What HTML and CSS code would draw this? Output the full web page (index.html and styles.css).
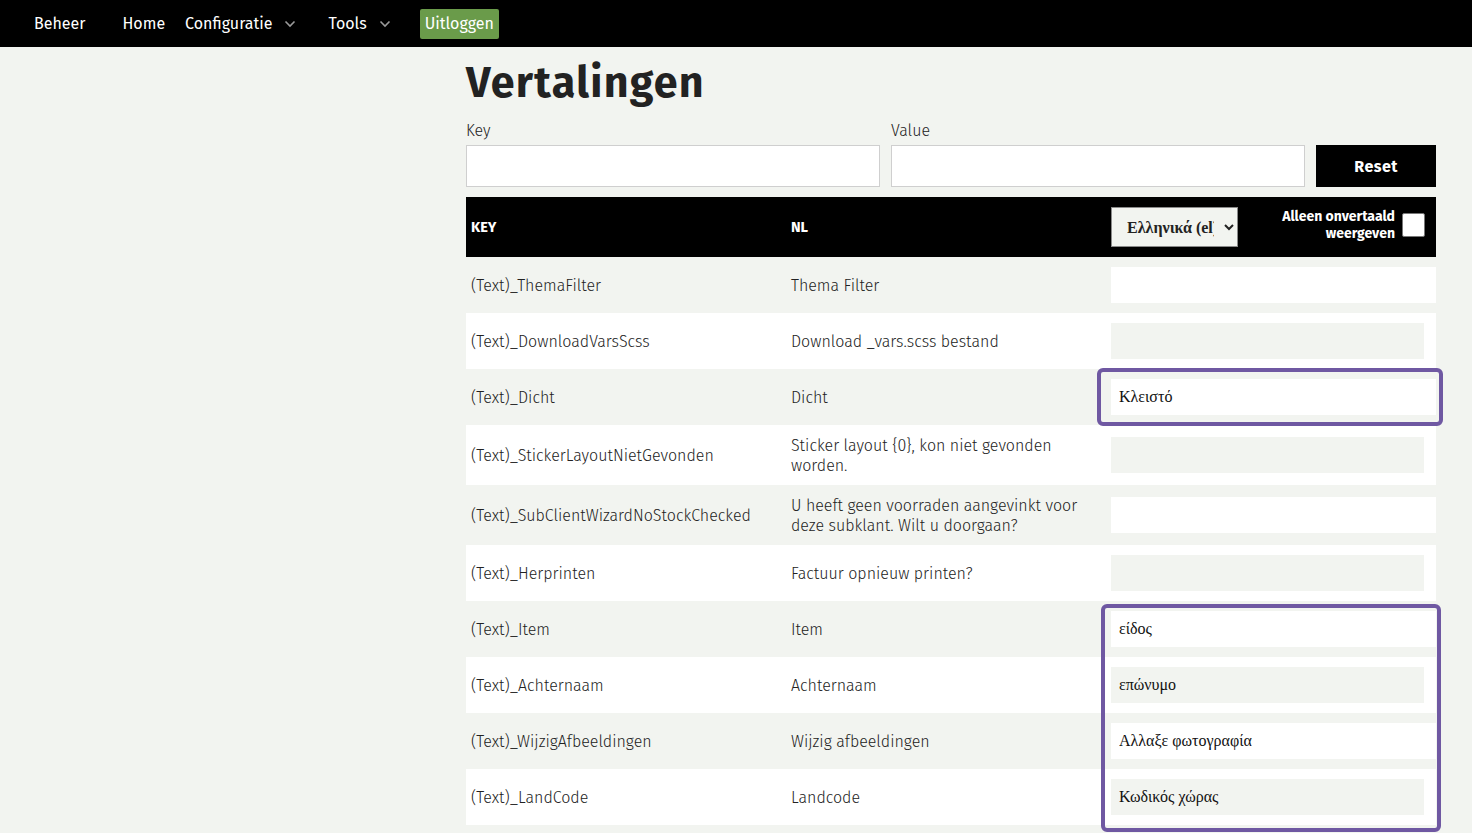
FILE: index.html
```html
<!DOCTYPE html>
<html lang="nl">
<head>
<meta charset="utf-8">
<title>Vertalingen</title>
<link rel="stylesheet" href="styles.css">
</head>
<body>
<nav class="topbar">
  <span class="brand">Beheer</span>
  <a class="nav-link" href="#">Home</a>
  <a class="nav-link dropdown" href="#">Configuratie
    <svg class="chev" width="12" height="8" viewBox="0 0 12 8"><path d="M1.5 1.5 L6 6 L10.5 1.5" fill="none" stroke="#9a9a9a" stroke-width="1.6"/></svg>
  </a>
  <a class="nav-link dropdown" href="#">Tools
    <svg class="chev" width="12" height="8" viewBox="0 0 12 8"><path d="M1.5 1.5 L6 6 L10.5 1.5" fill="none" stroke="#9a9a9a" stroke-width="1.6"/></svg>
  </a>
  <button class="logout">Uitloggen</button>
</nav>

<main class="content">
  <h1 class="title">Vertalingen</h1>
  <div class="filters">
    <label class="field">
      <span class="field-label">Key</span>
      <input class="field-input" type="text">
    </label>
    <label class="field">
      <span class="field-label">Value</span>
      <input class="field-input" type="text">
    </label>
    <button class="reset">Reset</button>
  </div>

  <div class="table-wrap">
    <table class="tr-table">
      <thead>
        <tr>
          <th class="col-key">KEY</th>
          <th class="col-nl">NL</th>
          <th class="col-lang">
            <div class="lang-head">
              <select class="lang-select"><option>Ελληνικά (el)</option></select>
              <label class="only-untranslated">
                <span>Alleen onvertaald<br>weergeven</span>
                <span class="checkbox"></span>
              </label>
            </div>
          </th>
        </tr>
      </thead>
      <tbody>
        <tr><td>(Text)_ThemaFilter</td><td>Thema Filter</td><td class="val"><input class="val-input" value=""></td></tr>
        <tr><td>(Text)_DownloadVarsScss</td><td>Download _vars.scss bestand</td><td class="val"><input class="val-input" value=""></td></tr>
        <tr><td>(Text)_Dicht</td><td>Dicht</td><td class="val"><input class="val-input" value="Κλειστό"></td></tr>
        <tr class="tall"><td>(Text)_StickerLayoutNietGevonden</td><td>Sticker layout {0}, kon niet gevonden worden.</td><td class="val"><input class="val-input" value=""></td></tr>
        <tr class="tall"><td>(Text)_SubClientWizardNoStockChecked</td><td>U heeft geen voorraden aangevinkt voor deze subklant. Wilt u doorgaan?</td><td class="val"><input class="val-input" value=""></td></tr>
        <tr><td>(Text)_Herprinten</td><td>Factuur opnieuw printen?</td><td class="val"><input class="val-input" value=""></td></tr>
        <tr><td>(Text)_Item</td><td>Item</td><td class="val"><input class="val-input" value="είδος"></td></tr>
        <tr><td>(Text)_Achternaam</td><td>Achternaam</td><td class="val"><input class="val-input" value="επώνυμο"></td></tr>
        <tr><td>(Text)_WijzigAfbeeldingen</td><td>Wijzig afbeeldingen</td><td class="val"><input class="val-input" value="Αλλαξε φωτογραφία"></td></tr>
        <tr><td>(Text)_LandCode</td><td>Landcode</td><td class="val"><input class="val-input" value="Κωδικός χώρας"></td></tr>
      </tbody>
    </table>
    <div class="mark mark-one"></div>
    <div class="mark mark-two"></div>
  </div>
</main>
</body>
</html>
```

FILE: styles.css
```css
html, body {
  margin: 0;
  padding: 0;
}
body {
  background: #f2f4f0;
  font-family: "Fira Sans", "Noto Sans", "Open Sans", sans-serif;
  color: #222;
  font-size: 16px;
}

.topbar {
  height: 47px;
  background: #000;
  display: flex;
  align-items: center;
  padding-left: 34px;
  box-sizing: border-box;
}
.brand {
  color: #fff;
  font-size: 16px;
  font-weight: 400;
  margin-right: 37px;
}
.nav-link {
  color: #fff;
  text-decoration: none;
  font-size: 16px;
  font-weight: 400;
  display: flex;
  align-items: center;
  margin-right: 20px;
}
.nav-link.dropdown {
  margin-right: 32px;
}
.chev {
  margin-left: 12px;
}
.logout {
  background: #6a9b4a;
  color: #fff;
  border: none;
  border-radius: 2px;
  font-family: inherit;
  font-size: 16px;
  font-weight: 400;
  height: 30px;
  padding: 0 5px;
  margin-left: -3px;
}

.content {
  margin-left: 466px;
  width: 970px;
  padding-bottom: 40px;
}
.title {
  margin: 10px 0 0;
  font-size: 43px;
  font-weight: 700;
  letter-spacing: 1.3px;
  line-height: 52px;
  color: #222;
}
.filters {
  display: flex;
  align-items: flex-end;
  gap: 11px;
  margin-top: 12px;
}
.field {
  display: flex;
  flex-direction: column;
  width: 415px;
}
.field-label {
  font-size: 16px;
  font-weight: 300;
  line-height: 20px;
  margin-bottom: 4px;
}
.field-input {
  height: 42px;
  box-sizing: border-box;
  border: 1px solid #cfcfcf;
  background: #fff;
  margin: 0;
}
.reset {
  width: 120px;
  height: 42px;
  background: #000;
  color: #fff;
  border: none;
  font-family: inherit;
  font-size: 16px;
  font-weight: 700;
  letter-spacing: 0.5px;
}

.table-wrap {
  position: relative;
  margin-top: 10px;
}
.tr-table {
  width: 970px;
  border-collapse: collapse;
  table-layout: fixed;
}
.tr-table th {
  background: #000;
  color: #fff;
  height: 60px;
  text-align: left;
  font-size: 14.5px;
  font-weight: 700;
  padding: 0 5px;
}
.col-key { width: 310px; }
.col-nl { width: 310px; }
.col-lang { width: 330px; padding: 0 !important; }
.lang-head {
  display: flex;
  align-items: center;
  justify-content: space-between;
  padding: 0 11px 0 5px;
}
.lang-select {
  width: 127px;
  height: 40px;
  background: #f2f4f0;
  border: 1px solid #8a8a8a;
  font-family: "Liberation Serif", "DejaVu Serif", serif;
  font-size: 16px;
  font-weight: 700;
  color: #222;
  padding: 0 7px 0 11px;
  border-radius: 0;
}
.only-untranslated {
  display: flex;
  align-items: center;
  gap: 7px;
  text-align: right;
  font-size: 14px;
  line-height: 17px;
  font-weight: 700;
  margin-top: -4px;
}
.checkbox {
  display: block;
  width: 23px;
  height: 24px;
  background: #fff;
  border: 1px solid #777;
  border-radius: 2px;
  box-sizing: border-box;
}

.tr-table td {
  height: 56px;
  padding: 2px 5px 0;
  font-size: 16px;
  font-weight: 300;
  line-height: 20px;
  vertical-align: middle;
  box-sizing: border-box;
}
.tr-table tr.tall td {
  height: 60px;
}
.tr-table tbody tr:nth-child(even) {
  background: #fff;
}
.tr-table td.val {
  padding: 0 0 0 5px;
}
.val-input {
  display: block;
  width: 100%;
  height: 36px;
  box-sizing: border-box;
  border: none;
  background: #fff;
  font-family: "Liberation Serif", "DejaVu Serif", serif;
  font-size: 16px;
  color: #111;
  padding: 0 8px;
  margin: 0;
}
.tr-table tbody tr:nth-child(even) .val-input {
  background: #f2f4f0;
  width: calc(100% - 12px);
}

.mark {
  position: absolute;
  border: 4px solid #6f58a2;
  border-radius: 6px;
  box-sizing: border-box;
  pointer-events: none;
}
.mark-one {
  left: 631px;
  top: 171px;
  width: 346px;
  height: 58px;
}
.mark-two {
  left: 635px;
  top: 407px;
  width: 340px;
  height: 228px;
}
```
